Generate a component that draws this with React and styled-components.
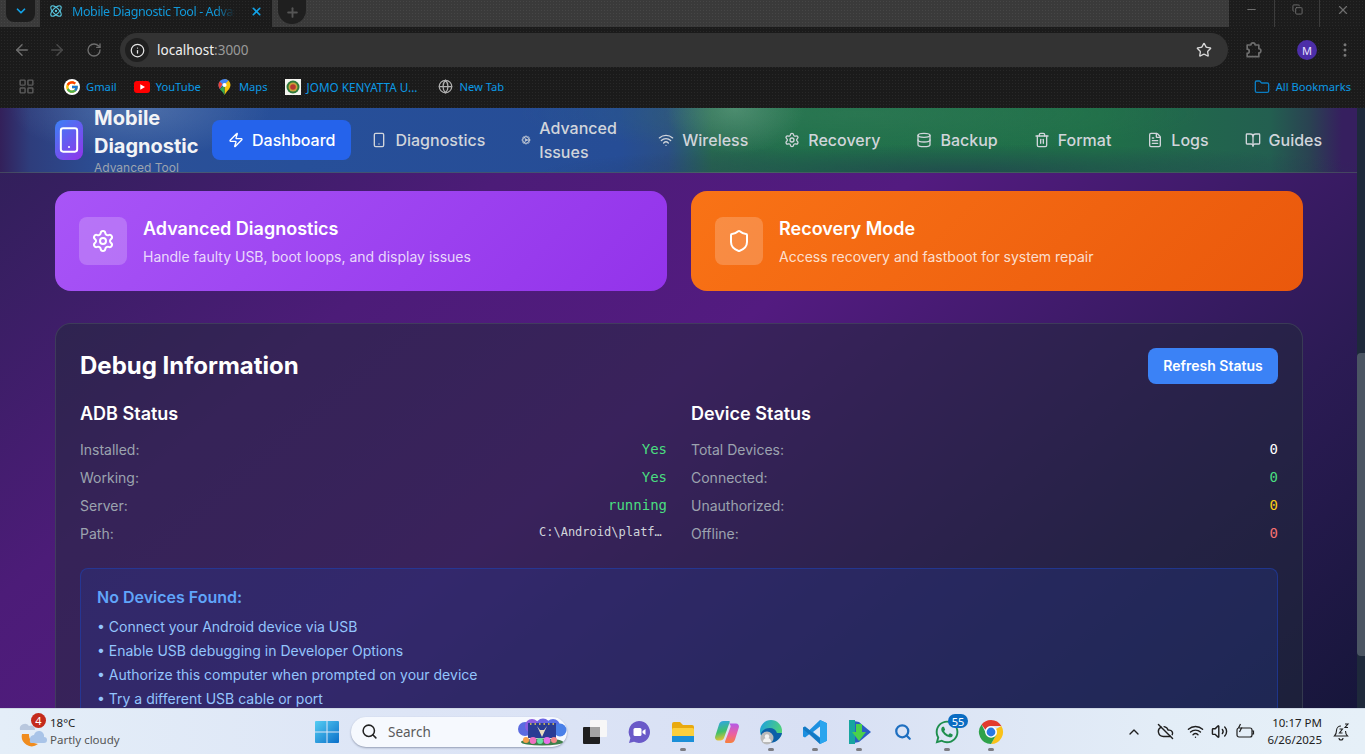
import React from "react";
import styled, { createGlobalStyle } from "styled-components";
import {
  ArrowLeft,
  ArrowRight,
  Atom,
  BookOpen,
  ChevronDown,
  ChevronUp,
  Cog,
  Copy,
  Database,
  EllipsisVertical,
  FileText,
  Folder,
  Globe,
  Info,
  LayoutGrid,
  Minus,
  Plus,
  RotateCw,
  Search as SearchIcon,
  Settings,
  Shield,
  Smartphone,
  Star,
  Trash2,
  Wifi,
  X,
  Zap,
  CloudOff,
  Volume2,
} from "lucide-react";
import { FcGoogle } from "react-icons/fc";
import { FaWhatsapp } from "react-icons/fa";

const GlobalStyle = createGlobalStyle`
  html, body {
    margin: 0;
    padding: 0;
    height: 100%;
    overflow: hidden;
  }
  * {
    box-sizing: border-box;
  }
`;

const Screen = styled.div`
  width: 1365px;
  height: 754px;
  display: flex;
  flex-direction: column;
  overflow: hidden;
  font-family: "Inter", "Liberation Sans", sans-serif;
`;

const texture = `
  background-image: radial-gradient(rgba(255, 255, 255, 0.06) 1px, transparent 1px);
  background-size: 3px 3px;
`;

/* browser chrome */
const TabStrip = styled.div`
  height: 27px;
  flex-shrink: 0;
  display: flex;
  align-items: stretch;
  background-color: #3a3a3a;
  ${texture}
`;

const TabSearch = styled.div`
  width: 40px;
  padding-left: 6px;
  color: #12a3e8;

  & > div {
    width: 29px;
    height: 22px;
    background: #1d1d1d;
    border-radius: 0 0 8px 8px;
    display: flex;
    align-items: center;
    justify-content: center;
  }
`;

const ActiveTab = styled.div`
  width: 232px;
  background-color: #1b1b1b;
  display: flex;
  align-items: center;
  padding: 0 0 5px 9px;
  color: #1298d8;
  ${texture}
`;

const TabTitle = styled.div`
  width: 163px;
  margin-left: 9px;
  font: 12.5px "Noto Sans", sans-serif;
  letter-spacing: -0.4px;
  white-space: nowrap;
  overflow: hidden;
  color: #1298d8;
  -webkit-mask-image: linear-gradient(90deg, #000 88%, transparent);
  mask-image: linear-gradient(90deg, #000 88%, transparent);
`;

const TabClose = styled.div`
  margin-left: 15px;
  display: flex;
  color: #12a3e8;
`;

const NewTab = styled.div`
  width: 28px;
  height: 24px;
  margin-left: 6px;
  background: #1f1f1f;
  border-radius: 0 0 14px 14px;
  color: #555;
  display: flex;
  align-items: center;
  justify-content: center;
`;

const StripFill = styled.div`
  flex: 1;
`;

const WindowControls = styled.div`
  width: 136px;
  display: flex;
  background-color: #1c1c1c;
  ${texture}
`;

const WindowButton = styled.div`
  flex: 1;
  display: flex;
  align-items: center;
  justify-content: center;
  padding-bottom: 8px;
  color: #6f6f6f;
  border-right: ${(p) => (p.$divider ? "1px solid #3c3c3c" : "none")};
`;

const Toolbar = styled.div`
  height: 46px;
  flex-shrink: 0;
  display: flex;
  align-items: center;
  background-color: #1b1b1b;
  ${texture}
`;

const NavArrows = styled.div`
  width: 120px;
  display: flex;
  align-items: center;
  padding-left: 13px;
  gap: 17px;
`;

const ToolIcon = styled.span`
  display: flex;
  margin-left: ${(p) => p.$offset || 0}px;
  color: ${(p) => p.$color || "#6e6e6e"};
`;

const Omnibox = styled.div`
  width: 1108px;
  height: 34px;
  border-radius: 17px;
  background: #333333;
  display: flex;
  align-items: center;
  padding: 0 16px 0 5px;
  font: 13.5px "Noto Sans", sans-serif;
`;

const InfoBadge = styled.div`
  width: 24px;
  height: 24px;
  border-radius: 50%;
  background: #1f1f1f;
  color: #e5e5e5;
  display: flex;
  align-items: center;
  justify-content: center;
  margin-right: 8px;
`;

const Host = styled.span`
  color: #f0f0f0;
`;

const Port = styled.span`
  color: #9a9a9a;
  flex: 1;
`;

const ToolbarRight = styled.div`
  flex: 1;
  display: flex;
  align-items: center;
  padding-left: 15px;
`;

const Avatar = styled.div`
  width: 20px;
  height: 20px;
  border-radius: 50%;
  background: #4c2ea8;
  color: #e9e4ff;
  font: 11px "Noto Sans", sans-serif;
  display: flex;
  align-items: center;
  justify-content: center;
  margin-left: 34px;
  margin-right: 19px;
`;

const BookmarkBar = styled.div`
  height: 35px;
  flex-shrink: 0;
  display: flex;
  align-items: center;
  padding: 0 14px 8px 18px;
  background-color: #1b1b1b;
  ${texture}
`;

const AppsGrid = styled.div`
  display: flex;
  color: #5c5c5c;
  margin-right: 29px;
`;

const Bookmark = styled.div`
  display: flex;
  align-items: center;
  gap: 6px;
  margin-right: ${(p) => p.$gap ?? 17}px;
  font: ${(p) => p.$size || 11.2}px "Noto Sans", sans-serif;
  color: #0b9ae6;
  white-space: nowrap;
`;

const GoogleDisc = styled.span`
  width: 16px;
  height: 16px;
  border-radius: 50%;
  background: #fff;
  display: flex;
  align-items: center;
  justify-content: center;
`;

const BarSpacer = styled.div`
  flex: 1;
`;

/* page */
const Viewport = styled.div`
  flex: 1;
  min-height: 0;
  display: flex;
  background: linear-gradient(140deg, #2e2057 0%, #4c1c78 28%, #531b80 48%, #2c1b55 78%, #16163a 100%);
`;

const Page = styled.div`
  flex: 1;
  min-width: 0;
  overflow: hidden;
`;

const Scrollbar = styled.div`
  width: 8px;
  background: #1e293b;
  padding-top: 245px;
`;

const ScrollThumb = styled.div`
  height: 303px;
  background: #4b5563;
  border-radius: 4px 0 0 4px;
`;

const NavBar = styled.nav`
  height: 65px;
  margin-right: -8px;
  display: flex;
  align-items: center;
  padding: 0 0 1px 55px;
  overflow: hidden;
  border-bottom: 1px solid rgba(75, 85, 99, 0.7);
  background:
    radial-gradient(ellipse 70px 46px at 735px 0, rgba(105, 165, 135, 0.55), transparent),
    radial-gradient(ellipse 130px 50px at 140px 0, rgba(110, 140, 185, 0.5), transparent),
    radial-gradient(ellipse 420px 28px at 960px 64px, rgba(33, 50, 80, 0.55), transparent),
    radial-gradient(ellipse 340px 40px at 860px 6px, rgba(60, 130, 95, 0.35), transparent),
    linear-gradient(90deg, #33205a 0, #2e3d7c 30px, #2b5097 110px, #274f99 300px, #264d96 620px, #2b4f84 668px, #276850 712px, #20704a 800px, #1f6f48 1100px, #235f50 1270px, #2a4252 1310px, #361f5f 1342px, #361f5f 100%);
`;

const Brand = styled.div`
  display: flex;
  align-items: center;
  width: 157px;
  flex-shrink: 0;
`;

const LogoBox = styled.div`
  width: 28px;
  height: 40px;
  flex-shrink: 0;
  border-radius: 8px;
  background: linear-gradient(135deg, #3b82f6, #9333ea);
  color: #fff;
  display: flex;
  align-items: center;
  justify-content: center;
  margin-right: 11px;
`;

const BrandText = styled.div`
  width: 110px;
`;

const BrandTitle = styled.div`
  font-size: 20px;
  line-height: 28px;
  font-weight: 700;
  color: #f3f4f6;
`;

const BrandSub = styled.div`
  font-size: 12px;
  line-height: 16px;
  color: #9ca3af;
`;

const NavLinks = styled.div`
  display: flex;
  align-items: center;
  gap: 4px;
`;

const NavItem = styled.div`
  height: 40px;
  padding: 0 16px;
  display: flex;
  align-items: center;
  gap: 8px;
  border-radius: 8px;
  font-size: 16px;
  font-weight: 500;
  line-height: 24px;
  flex-shrink: 0;
  color: ${(p) => (p.$active ? "#ffffff" : "#d1d5db")};
  background: ${(p) => (p.$active ? "#2563eb" : "transparent")};
`;

const NavLabel = styled.span`
  width: ${(p) => (p.$width ? `${p.$width}px` : "auto")};
`;

const Main = styled.main`
  padding: 18px 54px 0 55px;
`;

const CardGrid = styled.div`
  display: grid;
  grid-template-columns: 1fr 1fr;
  gap: 24px;
  margin-bottom: 32px;
`;

const ActionCard = styled.div`
  height: 100px;
  padding: 0 24px;
  border-radius: 16px;
  display: flex;
  align-items: center;
  gap: 16px;
  color: #fff;
  background: ${(p) =>
    p.$tone === "orange"
      ? "linear-gradient(135deg, #f97316, #ea580c)"
      : "linear-gradient(135deg, #a855f7, #9333ea)"};
`;

const CardIcon = styled.div`
  width: 48px;
  height: 48px;
  border-radius: 8px;
  background: rgba(255, 255, 255, 0.2);
  display: flex;
  align-items: center;
  justify-content: center;
`;

const CardTitle = styled.div`
  font-size: 18px;
  line-height: 28px;
  font-weight: 600;
  margin-bottom: 4px;
`;

const CardText = styled.div`
  font-size: 14px;
  line-height: 20px;
  color: rgba(255, 255, 255, 0.8);
`;

const Panel = styled.section`
  padding: 24px;
  border-radius: 16px;
  border: 1px solid rgba(75, 85, 99, 0.5);
  background: rgba(31, 41, 55, 0.5);
`;

const PanelHeader = styled.div`
  height: 36px;
  display: flex;
  align-items: center;
  justify-content: space-between;
  margin-bottom: 16px;
`;

const PanelTitle = styled.h2`
  margin: -2px 0 0;
  font-size: 24px;
  font-weight: 700;
  color: #fff;
`;

const RefreshButton = styled.button`
  height: 36px;
  width: 130px;
  border: none;
  border-radius: 8px;
  padding-bottom: 2px;
  background: #3b82f6;
  color: #fff;
  font: 600 14px "Inter", sans-serif;
`;

const StatusGrid = styled.div`
  display: grid;
  grid-template-columns: 1fr 1fr;
  gap: 24px;
`;

const StatusTitle = styled.h3`
  margin: 0 0 7px;
  font-size: 18px;
  line-height: 28px;
  font-weight: 600;
  color: #fff;
`;

const StatusRow = styled.div`
  height: 28px;
  display: flex;
  align-items: center;
  justify-content: space-between;
  font-size: 14px;
  color: #9ca3af;
`;

const StatusValue = styled.span`
  font-family: "DejaVu Sans Mono", monospace;
  font-size: ${(p) => (p.$small ? 12 : 14)}px;
  color: ${(p) => p.$color || "#fff"};
  ${(p) =>
    p.$small &&
    `
    max-width: 128px;
    overflow: hidden;
    white-space: nowrap;
    text-overflow: ellipsis;
    margin-top: -2px;
  `}
`;

const Notice = styled.div`
  margin-top: 21px;
  padding: 16px 16px;
  border-radius: 8px;
  border: 1px solid rgba(30, 64, 175, 0.6);
  background: rgba(37, 60, 150, 0.27);
`;

const NoticeTitle = styled.div`
  font-size: 16px;
  line-height: 24px;
  font-weight: 600;
  color: #60a5fa;
  margin-bottom: 6px;
`;

const NoticeItem = styled.div`
  font-size: 14px;
  line-height: 24px;
  color: #93c5fd;
`;

/* windows taskbar */
const Taskbar = styled.div`
  height: 46px;
  flex-shrink: 0;
  display: flex;
  align-items: center;
  background: linear-gradient(90deg, #e4eef8 0%, #dde5f6 30%, #d8e0f4 60%, #e3edf7 85%, #e6f0f8 100%);
  border-top: 1px solid #cfd8e6;
  font-family: "Noto Sans", sans-serif;
  color: #1c1c1c;
`;

const Weather = styled.div`
  width: 305px;
  flex-shrink: 0;
  display: flex;
  align-items: center;
  padding-left: 18px;
`;

const WeatherIconWrap = styled.div`
  position: relative;
  width: 32px;
  height: 32px;
`;

const WeatherBadge = styled.span`
  position: absolute;
  top: -3px;
  right: 4px;
  width: 15px;
  height: 15px;
  border-radius: 50%;
  background: #c42b1c;
  color: #fff;
  font-size: 11px;
  display: flex;
  align-items: center;
  justify-content: center;
`;

const WeatherText = styled.div`
  font-size: 11.5px;
  line-height: 17px;
  color: #222;
  padding-bottom: 2px;
`;

const WeatherSub = styled.div`
  color: #555;
`;

const AppSlot = styled.div`
  position: relative;
  width: 44px;
  height: 45px;
  display: flex;
  align-items: center;
  justify-content: center;
  flex-shrink: 0;

  &::after {
    content: "";
    display: ${(p) => (p.$running ? "block" : "none")};
    position: absolute;
    bottom: 3px;
    left: 19px;
    width: 6px;
    height: 3px;
    border-radius: 2px;
    background: #7c7c82;
  }
`;

const SearchBox = styled.div`
  width: 216px;
  height: 30px;
  margin: 0 6px 0 2px;
  border-radius: 15px;
  background: #f6f9fe;
  box-shadow: 0 1px 2px rgba(60, 70, 100, 0.45);
  display: flex;
  align-items: center;
  padding-left: 10px;
  font-size: 13.5px;
  color: #5a5a5a;
  gap: 10px;
  flex-shrink: 0;
`;

const SearchLabel = styled.span`
  flex: 1;
`;

const CountBadge = styled.span`
  position: absolute;
  top: 5px;
  right: 1px;
  width: 20px;
  height: 14px;
  border-radius: 7px;
  background: #0a6cc2;
  color: #fff;
  font-size: 11px;
  display: flex;
  align-items: center;
  justify-content: center;
`;

const Tray = styled.div`
  margin-left: auto;
  display: flex;
  align-items: center;
  padding-right: 14px;
  color: #1f1f1f;
`;

const TrayIcon = styled.span`
  display: flex;
  margin-right: ${(p) => p.$gap || 0}px;
`;

const Clock = styled.div`
  font-size: 11.5px;
  line-height: 17px;
  text-align: right;
  margin-right: 11px;
  padding-bottom: 1px;
  color: #222;
`;

const ExtensionIcon = () => (
  <svg width="20" height="20" viewBox="0 0 24 24" fill="none" stroke="currentColor" strokeWidth="2" strokeLinejoin="round">
    <path d="M5 6h4.5a2.500 2.500 0 0 1 5 0H19v4.500a2.500 2.500 0 0 1 0 5V20H5v-4a2.500 2.500 0 0 0 0-5z" />
  </svg>
);

const WeatherIcon = () => (
  <svg width="32" height="32" viewBox="0 0 32 32">
    <path d="M2 14a5 5 0 0 1 9-4 4 4 0 0 1 6 4z" fill="#b9c8de" />
    <path d="M4 18a10 10 0 0 0 16 10 9 9 0 0 1-9-10z" fill="#f08c1e" />
    <path d="M12 24a4 4 0 0 1 4-5 5 5 0 0 1 10 2 3 3 0 0 1 0 6H14a2 2 0 0 1-2-3z" fill="#a9c4e8" />
  </svg>
);

const WindowsLogo = () => (
  <svg width="24" height="24" viewBox="0 0 24 24">
    <defs>
      <linearGradient id="win" x1="0" y1="0" x2="1" y2="1">
        <stop offset="0" stopColor="#55cdf3" />
        <stop offset="1" stopColor="#0a6fc9" />
      </linearGradient>
    </defs>
    <path d="M1 1h10.500v10.500H0V2a1 1 0 0 1 1-1zM12.500 1H23a1 1 0 0 1 1 1v9.500H12.500zM0 12.500h11.500V23H1a1 1 0 0 1-1-1zM12.500 12.500H24V22a1 1 0 0 1-1 1H12.500z" fill="url(#win)" />
  </svg>
);

const SearchArt = () => (
  <svg width="50" height="28" viewBox="0 0 50 28">
    <circle cx="8" cy="11" r="7" fill="#5b6be0" />
    <circle cx="15" cy="8" r="7" fill="#8a5ce0" />
    <circle cx="26" cy="8" r="7.500" fill="#6a63e4" />
    <circle cx="36" cy="8" r="7" fill="#5a6ee6" />
    <circle cx="43" cy="12" r="6.500" fill="#4a80e8" />
    <rect x="11" y="5" width="28" height="15" fill="#2a3c94" />
    <path d="M13 6h24" stroke="#f2d24a" strokeWidth="1.400" strokeDasharray="1.500 3" />
    <path d="M20 8l5 11 5-11-3 4h-4z" fill="#e8dcc0" />
    <ellipse cx="25" cy="24" rx="21" ry="3.600" fill="#3f7f4a" />
    <circle cx="9" cy="22" r="3" fill="#f7a04a" />
    <circle cx="16" cy="22.500" r="3.400" fill="#f06fc0" />
    <circle cx="23" cy="23" r="3" fill="#65e0a0" />
    <circle cx="30" cy="22.500" r="3.400" fill="#e86fe8" />
    <circle cx="37" cy="22" r="3" fill="#f58a8a" />
  </svg>
);

const TaskView = () => (
  <svg width="24" height="24" viewBox="0 0 24 24">
    <rect x="7" y="0" width="17" height="17" rx="1" fill="#f7f7f7" />
    <rect x="0" y="7" width="17" height="17" rx="1" fill="#1f1f1f" />
    <rect x="7" y="7" width="10" height="10" fill="#a3a3a3" />
  </svg>
);

const MeetIcon = () => (
  <svg width="26" height="26" viewBox="0 0 26 26">
    <path d="M13 2a11 11 0 1 1-5 20.800L3 24l1.400-5A11 11 0 0 1 13 2z" fill="#6a5ac8" />
    <rect x="7.500" y="9" width="8" height="8" rx="1.500" fill="#fff" />
    <path d="M16.500 12l3-2v6l-3-2z" fill="#fff" />
  </svg>
);

const ExplorerIcon = () => (
  <svg width="26" height="24" viewBox="0 0 26 24">
    <path d="M2 4a2 2 0 0 1 2-2h6l3 3h9a2 2 0 0 1 2 2v4H2z" fill="#e9a90f" />
    <rect x="2" y="8" width="22" height="14" rx="1.500" fill="#fbcf3d" />
    <rect x="2" y="16" width="22" height="6" fill="#1b8fd8" />
  </svg>
);

const CopilotIcon = () => (
  <svg width="26" height="26" viewBox="0 0 26 26">
    <defs>
      <linearGradient id="cpA" x1="0.3" y1="0" x2="0.5" y2="1">
        <stop offset="0" stopColor="#2fa4e8" />
        <stop offset="0.55" stopColor="#3fc06a" />
        <stop offset="1" stopColor="#f2c230" />
      </linearGradient>
      <linearGradient id="cpB" x1="0.5" y1="0" x2="0.5" y2="1">
        <stop offset="0" stopColor="#b45ae6" />
        <stop offset="0.55" stopColor="#ec5f9f" />
        <stop offset="1" stopColor="#f7813a" />
      </linearGradient>
    </defs>
    <path d="M11 2h4c1 0 1 1 .4 2L10 19c-.6 1.600-2 2.500-3.500 2.500H4a3 3 0 0 1-2.900-3.800l3.800-12A5 5 0 0 1 9.600 2z" fill="url(#cpA)" />
    <path d="M15 4.500h7a3 3 0 0 1 2.900 3.800l-3.800 12A5 5 0 0 1 16.400 24H12c-1 0-1.200-1-.8-2l5.300-14c.3-1 0-2.500-1.500-3.500z" fill="url(#cpB)" />
  </svg>
);

const EdgeIcon = () => (
  <svg width="26" height="26" viewBox="0 0 26 26">
    <defs>
      <linearGradient id="edge" x1="0" y1="0" x2="1" y2="0.4">
        <stop offset="0" stopColor="#1b9de2" />
        <stop offset="1" stopColor="#4fd27a" />
      </linearGradient>
    </defs>
    <circle cx="13" cy="12" r="11" fill="url(#edge)" />
    <path d="M3 14c3-6 14-7 16 0h5c-1 6-7 10-12 10A10 10 0 0 1 3 14z" fill="#0c5fa8" />
    <circle cx="9" cy="19" r="6.500" fill="#b9b9b9" />
    <circle cx="9" cy="17.500" r="2.200" fill="#f2f2f2" />
    <path d="M5 23a4 4 0 0 1 8 0z" fill="#f2f2f2" />
  </svg>
);

const VsCodeIcon = () => (
  <svg width="26" height="26" viewBox="0 0 26 26">
    <path d="M18 1l7 3.200v17.600L18 25 7.500 15 3 18.600 1 17.400V8.600L3 7.400 7.500 11z" fill="#1c8fe0" />
    <path d="M18 7.500L11 13l7 5.500z" fill="#dce6f6" />
    <path d="M18 1l7 3.200v17.600L18 25z" fill="#2aa5ee" />
    <path d="M1 8.600L3 7.400 18 19.500V25L1 10z" fill="#0f6fb8" opacity="0.7" />
  </svg>
);

const PlayerIcon = () => (
  <svg width="26" height="28" viewBox="0 0 26 28">
    <path d="M3 2l10 2 12 10-12 10-10 2z" fill="#2b5fc4" />
    <path d="M3 2h6v24H3z" fill="#17a5a0" />
    <path d="M10 6h6v8h4l-7 9-7-9h4z" fill="#4bd04a" />
  </svg>
);

const ChromeIcon = () => (
  <svg width="26" height="26" viewBox="0 0 26 26">
    <path d="M13 1a12 12 0 0 1 10.400 6H13a6 6 0 0 0-5.600 3.800L3.600 5.500A12 12 0 0 1 13 1z" fill="#e33b2e" />
    <path d="M23.400 7A12 12 0 0 1 13 25l5.200-9A6 6 0 0 0 18 10z" fill="#f9c21a" />
    <path d="M3.600 5.500L8.800 16A6 6 0 0 0 18.200 16L13 25A12 12 0 0 1 3.600 5.500z" fill="#2fa24a" />
    <circle cx="13" cy="13" r="5.800" fill="#fff" />
    <circle cx="13" cy="13" r="4.400" fill="#2a78e4" />
  </svg>
);

const YoutubeIcon = () => (
  <svg width="16" height="12" viewBox="0 0 16 12">
    <rect width="16" height="12" rx="3" fill="#f00" />
    <path d="M6.300 3.200L11 6 6.300 8.800z" fill="#fff" />
  </svg>
);

const MapsIcon = () => (
  <svg width="15" height="16" viewBox="-0.500 0 15 16">
    <path d="M6 0a6 6 0 0 1 6 6c0 3-2.400 5-4 7l-2 3z" fill="#f4c20d" />
    <path d="M6 0a6 6 0 0 0-6 6c0 1.500.6 2.800 1.400 4L10 1.600A6 6 0 0 0 6 0z" fill="#4285f4" />
    <path d="M6 16l-2-3C2.800 11.600 1.800 11 1.400 10L6 6z" fill="#34a853" />
    <path d="M1 2.500L4 5 1.400 10C.6 8.800 0 7.500 0 6a6 6 0 0 1 1-3.500z" fill="#ea4335" />
    <circle cx="6" cy="6" r="2.100" fill="#fff" />
  </svg>
);

const CrestIcon = () => (
  <svg width="16" height="16" viewBox="0 0 16 16">
    <rect width="16" height="16" fill="#f5f5f0" />
    <circle cx="8" cy="8" r="6.500" fill="#2f7a3a" />
    <circle cx="8" cy="8" r="4.500" fill="#c8a23a" />
    <circle cx="8" cy="8" r="2.800" fill="#b7372f" />
  </svg>
);

const BatteryPlugIcon = () => (
  <svg width="20" height="18" viewBox="0 0 20 18" fill="none" stroke="currentColor" strokeWidth="1.200">
    <path d="M6 5H15a2 2 0 0 1 2 2v5a2 2 0 0 1-2 2H4a2 2 0 0 1-2-2V7a2 2 0 0 1 1-1.700" />
    <path d="M17 8h1.500v3H17" />
    <path d="M5.500 1L3.500 5h3l-2 4" />
  </svg>
);

const BellSnoozeIcon = () => (
  <svg width="18" height="18" viewBox="0 0 18 18" fill="none" stroke="currentColor" strokeWidth="1.100">
    <path d="M8 3a4.500 4.500 0 0 0-4.500 4.500c0 3-1 4.500-2 5.500h13c-1-1-2-2.500-2-5" />
    <path d="M6 15a2 2 0 0 0 4 0" />
    <path d="M6.500 6h3l-3 4h3" />
    <path d="M12 1h3l-3 3.500h3" />
  </svg>
);

const navItems = [
  { label: "Dashboard", icon: <Zap size={16} />, active: true },
  { label: "Diagnostics", icon: <Smartphone size={16} /> },
  { label: "Advanced Issues", icon: <Cog size={10} />, width: 83 },
  { label: "Wireless", icon: <Wifi size={16} /> },
  { label: "Recovery", icon: <Settings size={16} /> },
  { label: "Backup", icon: <Database size={16} /> },
  { label: "Format", icon: <Trash2 size={16} /> },
  { label: "Logs", icon: <FileText size={16} /> },
  { label: "Guides", icon: <BookOpen size={16} /> },
];

const adbRows = [
  { label: "Installed:", value: "Yes", color: "#4ade80" },
  { label: "Working:", value: "Yes", color: "#4ade80" },
  { label: "Server:", value: "running", color: "#4ade80" },
  { label: "Path:", value: "C:\\Android\\platform-tools\\adb.exe", color: "#d1d5db", small: true },
];

const deviceRows = [
  { label: "Total Devices:", value: "0", color: "#ffffff" },
  { label: "Connected:", value: "0", color: "#4ade80" },
  { label: "Unauthorized:", value: "0", color: "#facc15" },
  { label: "Offline:", value: "0", color: "#f87171" },
];

const tips = [
  "Connect your Android device via USB",
  "Enable USB debugging in Developer Options",
  "Authorize this computer when prompted on your device",
  "Try a different USB cable or port",
];

const StatusList = ({ title, rows }) => (
  <div>
    <StatusTitle>{title}</StatusTitle>
    {rows.map((row) => (
      <StatusRow key={row.label}>
        <span>{row.label}</span>
        <StatusValue $color={row.color} $small={row.small}>
          {row.value}
        </StatusValue>
      </StatusRow>
    ))}
  </div>
);

const App = () => {
  return (
    <Screen>
      <GlobalStyle />

      <TabStrip>
        <TabSearch>
          <div>
            <ChevronDown size={14} strokeWidth={3} />
          </div>
        </TabSearch>
        <ActiveTab>
          <Atom size={14} color="#58c4dc" />
          <TabTitle>Mobile Diagnostic Tool - Advanced Tool</TabTitle>
          <TabClose>
            <X size={13} strokeWidth={3} />
          </TabClose>
        </ActiveTab>
        <NewTab>
          <Plus size={15} strokeWidth={3} />
        </NewTab>
        <StripFill />
        <WindowControls>
          <WindowButton $divider>
            <Minus size={13} />
          </WindowButton>
          <WindowButton $divider>
            <Copy size={11} />
          </WindowButton>
          <WindowButton>
            <X size={14} />
          </WindowButton>
        </WindowControls>
      </TabStrip>

      <Toolbar>
        <NavArrows>
          <ToolIcon>
            <ArrowLeft size={18} />
          </ToolIcon>
          <ToolIcon $color="#4a4a4a">
            <ArrowRight size={18} />
          </ToolIcon>
          <ToolIcon $offset={3}>
            <RotateCw size={16} />
          </ToolIcon>
        </NavArrows>
        <Omnibox>
          <InfoBadge>
            <Info size={15} />
          </InfoBadge>
          <Host>localhost</Host>
          <Port>:3000</Port>
          <ToolIcon $color="#d8d8d8">
            <Star size={16} />
          </ToolIcon>
        </Omnibox>
        <ToolbarRight>
          <ToolIcon>
            <ExtensionIcon />
          </ToolIcon>
          <Avatar>M</Avatar>
          <ToolIcon $color="#777">
            <EllipsisVertical size={18} />
          </ToolIcon>
        </ToolbarRight>
      </Toolbar>

      <BookmarkBar>
        <AppsGrid>
          <LayoutGrid size={17} />
        </AppsGrid>
        <Bookmark>
          <GoogleDisc>
            <FcGoogle size={14} />
          </GoogleDisc>
          Gmail
        </Bookmark>
        <Bookmark>
          <YoutubeIcon />
          YouTube
        </Bookmark>
        <Bookmark>
          <MapsIcon />
          Maps
        </Bookmark>
        <Bookmark $gap={21} $size={11.7}>
          <CrestIcon />
          JOMO KENYATTA U...
        </Bookmark>
        <Bookmark>
          <ToolIcon $color="#b0b0b0">
            <Globe size={15} />
          </ToolIcon>
          New Tab
        </Bookmark>
        <BarSpacer />
        <Bookmark $gap={0}>
          <Folder size={16} color="#0b7cc0" />
          All Bookmarks
        </Bookmark>
      </BookmarkBar>

      <Viewport>
        <Page>
          <NavBar>
            <Brand>
              <LogoBox>
                <Smartphone size={28} strokeWidth={1.7} />
              </LogoBox>
              <BrandText>
                <BrandTitle>Mobile Diagnostic</BrandTitle>
                <BrandSub>Advanced Tool</BrandSub>
              </BrandText>
            </Brand>
            <NavLinks>
              {navItems.map((item) => (
                <NavItem key={item.label} $active={item.active}>
                  {item.icon}
                  <NavLabel $width={item.width}>{item.label}</NavLabel>
                </NavItem>
              ))}
            </NavLinks>
          </NavBar>

          <Main>
            <CardGrid>
              <ActionCard>
                <CardIcon>
                  <Settings size={24} />
                </CardIcon>
                <div>
                  <CardTitle>Advanced Diagnostics</CardTitle>
                  <CardText>Handle faulty USB, boot loops, and display issues</CardText>
                </div>
              </ActionCard>
              <ActionCard $tone="orange">
                <CardIcon>
                  <Shield size={24} />
                </CardIcon>
                <div>
                  <CardTitle>Recovery Mode</CardTitle>
                  <CardText>Access recovery and fastboot for system repair</CardText>
                </div>
              </ActionCard>
            </CardGrid>

            <Panel>
              <PanelHeader>
                <PanelTitle>Debug Information</PanelTitle>
                <RefreshButton>Refresh Status</RefreshButton>
              </PanelHeader>
              <StatusGrid>
                <StatusList title="ADB Status" rows={adbRows} />
                <StatusList title="Device Status" rows={deviceRows} />
              </StatusGrid>
              <Notice>
                <NoticeTitle>No Devices Found:</NoticeTitle>
                {tips.map((tip) => (
                  <NoticeItem key={tip}>• {tip}</NoticeItem>
                ))}
              </Notice>
            </Panel>
          </Main>
        </Page>
        <Scrollbar>
          <ScrollThumb />
        </Scrollbar>
      </Viewport>

      <Taskbar>
        <Weather>
          <WeatherIconWrap>
            <WeatherIcon />
            <WeatherBadge>4</WeatherBadge>
          </WeatherIconWrap>
          <WeatherText>
            18°C
            <WeatherSub>Partly cloudy</WeatherSub>
          </WeatherText>
        </Weather>
        <AppSlot>
          <WindowsLogo />
        </AppSlot>
        <SearchBox>
          <SearchIcon size={17} color="#222" strokeWidth={2.2} />
          <SearchLabel>Search</SearchLabel>
          <SearchArt />
        </SearchBox>
        <AppSlot>
          <TaskView />
        </AppSlot>
        <AppSlot>
          <MeetIcon />
        </AppSlot>
        <AppSlot $running>
          <ExplorerIcon />
        </AppSlot>
        <AppSlot>
          <CopilotIcon />
        </AppSlot>
        <AppSlot $running>
          <EdgeIcon />
        </AppSlot>
        <AppSlot $running>
          <VsCodeIcon />
        </AppSlot>
        <AppSlot $running>
          <PlayerIcon />
        </AppSlot>
        <AppSlot>
          <SearchIcon size={18} color="#1f6fc0" strokeWidth={3} />
        </AppSlot>
        <AppSlot $running>
          <FaWhatsapp size={26} color="#1f8f4e" />
          <CountBadge>55</CountBadge>
        </AppSlot>
        <AppSlot $running>
          <ChromeIcon />
        </AppSlot>
        <Tray>
          <TrayIcon $gap={15}>
            <ChevronUp size={16} />
          </TrayIcon>
          <TrayIcon $gap={13}>
            <CloudOff size={17} />
          </TrayIcon>
          <TrayIcon $gap={7}>
            <Wifi size={17} />
          </TrayIcon>
          <TrayIcon $gap={7}>
            <Volume2 size={17} />
          </TrayIcon>
          <TrayIcon $gap={12}>
            <BatteryPlugIcon />
          </TrayIcon>
          <Clock>
            10:17 PM
            <div>6/26/2025</div>
          </Clock>
          <TrayIcon>
            <BellSnoozeIcon />
          </TrayIcon>
        </Tray>
      </Taskbar>
    </Screen>
  );
};

export default App;
